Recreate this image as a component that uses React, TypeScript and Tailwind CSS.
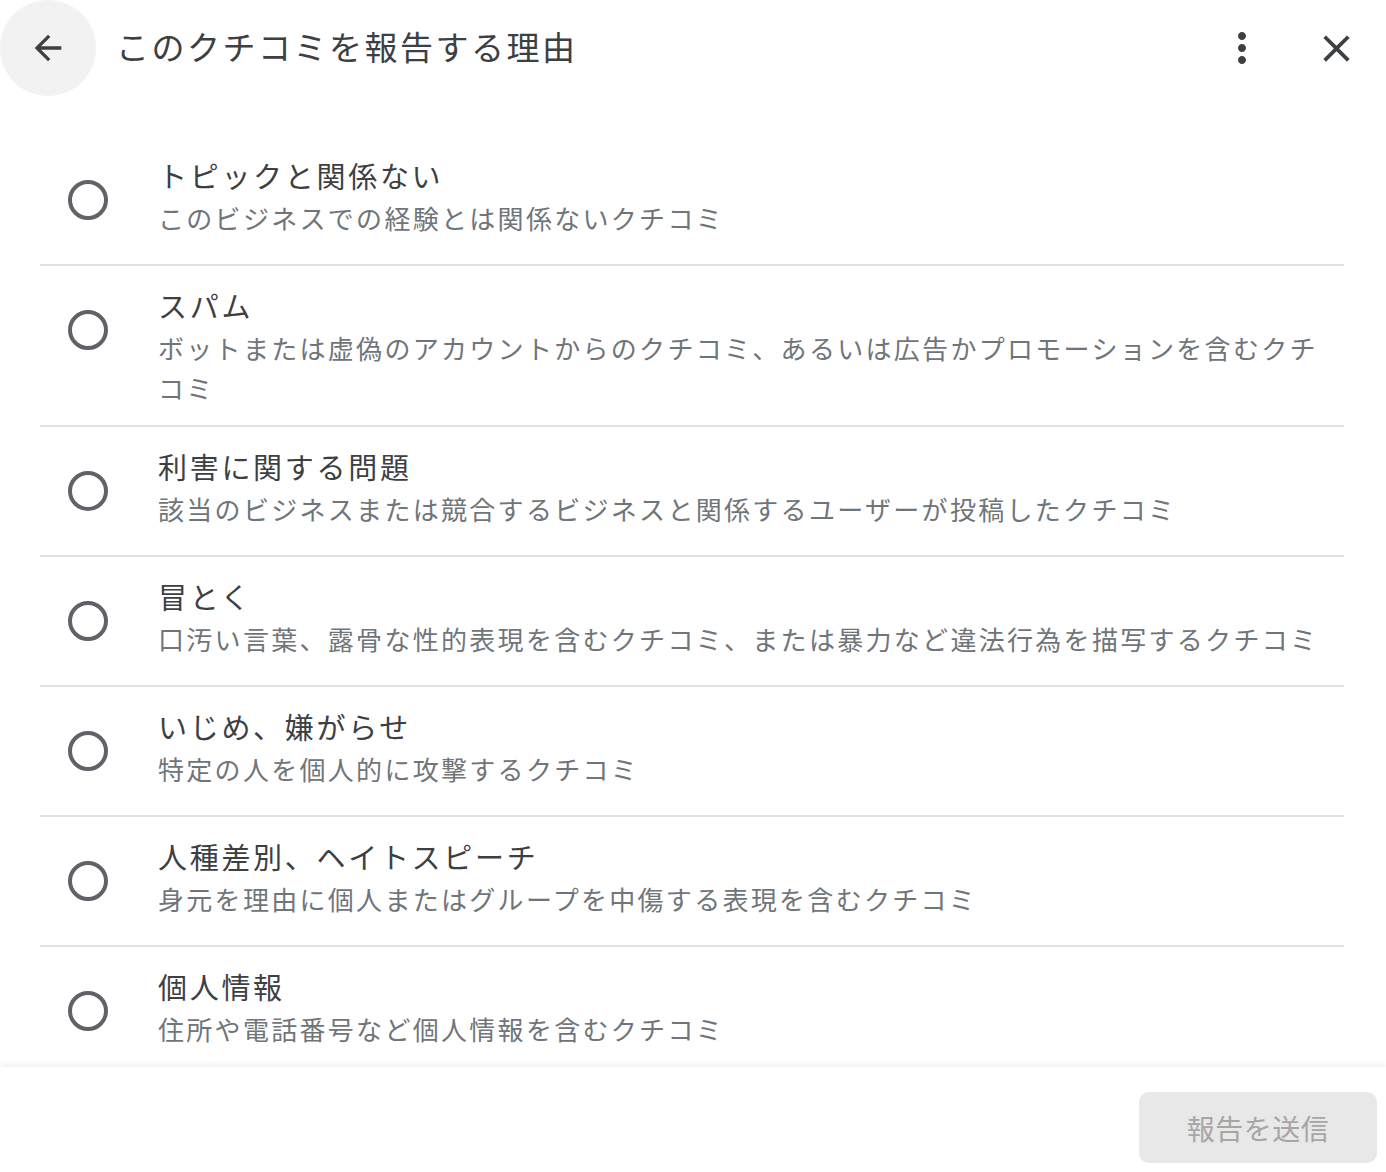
import { useState } from 'react';

const reasons = [
  { title: 'トピックと関係ない', desc: 'このビジネスでの経験とは関係ないクチコミ' },
  {
    title: 'スパム',
    desc: 'ボットまたは虚偽のアカウントからのクチコミ、あるいは広告かプロモーションを含むクチコミ',
  },
  { title: '利害に関する問題', desc: '該当のビジネスまたは競合するビジネスと関係するユーザーが投稿したクチコミ' },
  { title: '冒とく', desc: '口汚い言葉、露骨な性的表現を含むクチコミ、または暴力など違法行為を描写するクチコミ' },
  { title: 'いじめ、嫌がらせ', desc: '特定の人を個人的に攻撃するクチコミ' },
  { title: '人種差別、ヘイトスピーチ', desc: '身元を理由に個人またはグループを中傷する表現を含むクチコミ' },
  { title: '個人情報', desc: '住所や電話番号など個人情報を含むクチコミ' },
];

const font = { fontFamily: '"Noto Sans CJK JP", "Noto Sans", sans-serif' };

export default function App() {
  const [selected, setSelected] = useState<number | null>(null);

  return (
    <div className="flex h-[1172px] w-[1386px] flex-col overflow-hidden bg-white" style={font}>
      <header className="flex h-[96px] shrink-0 items-center">
        <button type="button" className="flex h-[96px] w-[96px] shrink-0 items-center justify-center rounded-full bg-[#f2f2f2]">
          <svg viewBox="0 0 24 24" className="h-[40px] w-[40px] fill-[#3c4043]">
            <path d="M20 11H7.83l5.59-5.59L12 4l-8 8 8 8 1.41-1.41L7.83 13H20v-2z" />
          </svg>
        </button>
        <h1 className="mb-[4px] ml-[20px] flex-1 text-[33px] leading-none tracking-[2.5px] text-[#3c4043]">このクチコミを報告する理由</h1>
        <button type="button" className="flex h-[48px] w-[48px] items-center justify-center">
          <svg viewBox="0 0 24 24" className="h-[48px] w-[48px] fill-[#3c4043]">
            <path d="M12 8c1.1 0 2-.9 2-2s-.9-2-2-2-2 .9-2 2 .9 2 2 2zm0 2c-1.1 0-2 .9-2 2s.9 2 2 2 2-.9 2-2-.9-2-2-2zm0 6c-1.1 0-2 .9-2 2s.9 2 2 2 2-.9 2-2-.9-2-2-2z" />
          </svg>
        </button>
        <button type="button" className="ml-[46px] mr-[26px] flex h-[48px] w-[48px] items-center justify-center">
          <svg viewBox="0 0 24 24" className="h-[45px] w-[45px] fill-[#3c4043]">
            <path d="M19 6.41L17.59 5 12 10.59 6.41 5 5 6.41 10.59 12 5 17.59 6.41 19 12 13.41 17.59 19 19 17.59 13.41 12z" />
          </svg>
        </button>
      </header>

      <div className="min-h-0 flex-1 overflow-hidden pl-[40px] pr-[42px] pt-[40px]">
        {reasons.map((r, i) => (
          <label
            key={r.title}
            className={`flex cursor-pointer items-start ${i < reasons.length - 1 ? 'border-b-2 border-[#dfe1e5]' : ''}`}
          >
            <span className="flex shrink-0 py-[44px] pl-[28px] pr-[50px]">
              <input
                type="radio"
                name="reason"
                checked={selected === i}
                onChange={() => setSelected(i)}
                className="sr-only"
              />
              <span className="flex h-[40px] w-[40px] items-center justify-center rounded-full border-[4px] border-[#5f6368]">
                {selected === i ? <span className="h-[18px] w-[18px] rounded-full bg-[#1a73e8]" /> : null}
              </span>
            </span>
            <span className="flex min-w-0 flex-1 flex-col pb-[17px] pt-[16px]">
              <span className="text-[29px] leading-[46px] tracking-[2.7px] text-[#3c4043]">{r.title}</span>
              <span className="text-[26px] leading-[40px] tracking-[2.3px] text-[#70757a]">{r.desc}</span>
            </span>
          </label>
        ))}
      </div>

      <footer className="relative flex h-[105px] shrink-0 items-start justify-end bg-white pr-[9px] pt-[25px] shadow-[0_-3px_6px_rgba(0,0,0,0.06)]">
        <button
          type="button"
          disabled
          className="h-[71px] w-[238px] rounded-[10px] bg-[#e8e8e8] text-[28px] tracking-[0.5px] text-[#a6a6a6]"
        >
          報告を送信
        </button>
      </footer>
    </div>
  );
}
